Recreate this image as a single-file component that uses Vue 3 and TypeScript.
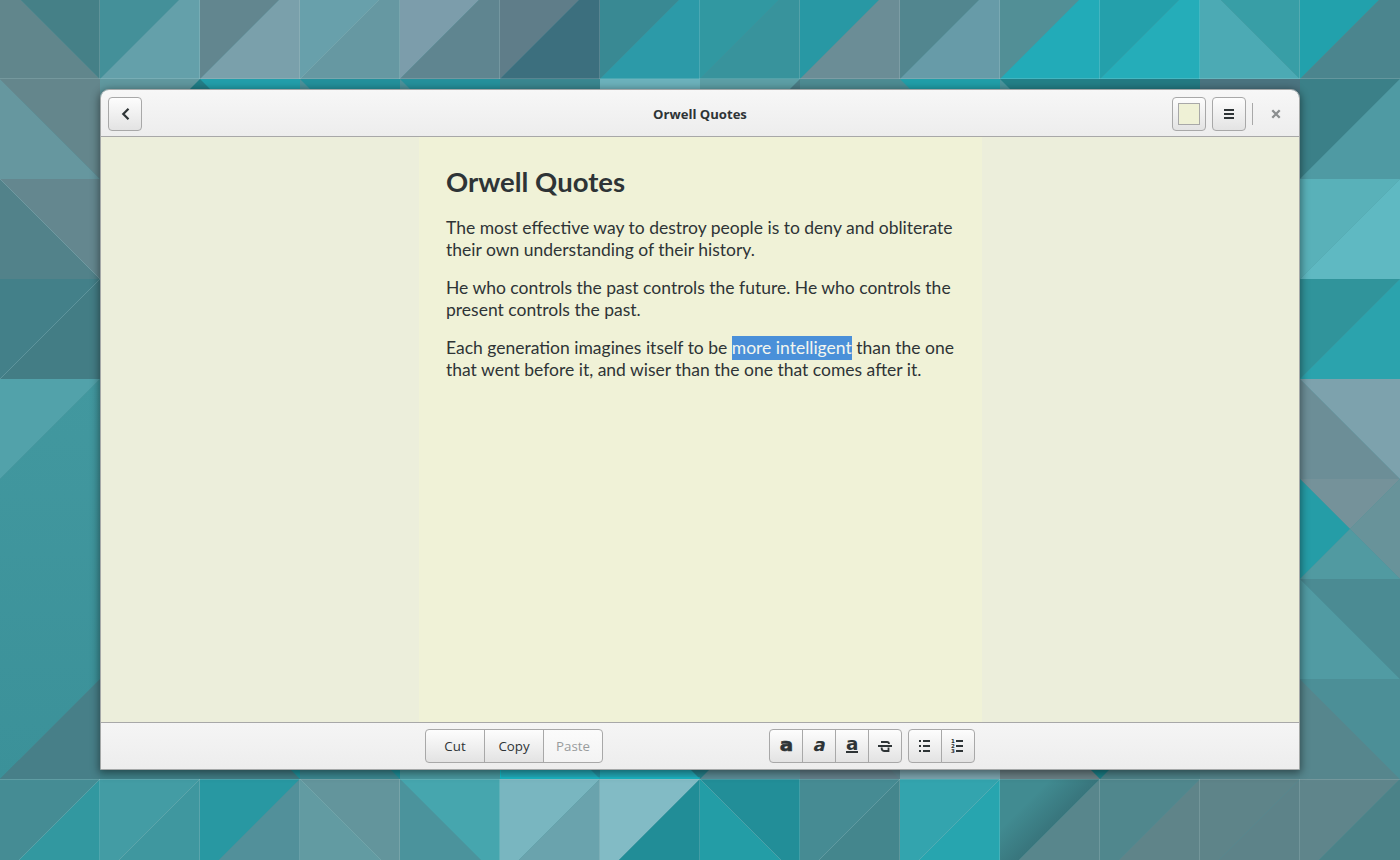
<script setup lang="ts">
interface Facet { points: string; fill: string }

const facets: Facet[] = []
const add = (points: string, fill: string) => facets.push({ points, fill })

// Each cell: diagonal direction, left-hand colour, right-hand colour.
type Cell = ['/' | '\\', string, string]
const cell = (x: number, y: number, [dir, left, right]: Cell) => {
  const r = x + 100
  const b = y + 100
  if (dir === '/') {
    add(`${x},${y} ${r},${y} ${x},${b}`, left)
    add(`${r},${y} ${r},${b} ${x},${b}`, right)
  } else {
    add(`${x},${y} ${r},${b} ${x},${b}`, left)
    add(`${x},${y} ${r},${y} ${r},${b}`, right)
  }
}

const top: Cell[] = [
  ['\\', '#61868c', '#458087'], ['/', '#449099', '#64a0aa'], ['/', '#62868f', '#7aa0ab'],
  ['/', '#68a0ab', '#6698a2'], ['/', '#7c9dab', '#5f8590'], ['/', '#5f7d89', '#3c6f7e'],
  ['/', '#398993', '#2c9aa8'], ['/', '#3198a1', '#38939c'], ['/', '#2898a4', '#6b8d96'],
  ['/', '#52868f', '#679ba8'], ['/', '#528f96', '#22abb8'], ['/', '#24a0ab', '#25adb9'],
  ['\\', '#4caab4', '#389ea6'], ['/', '#22a1ac', '#4b858e'],
]
const bottom: Cell[] = [
  ['/', '#458c94', '#3298a0'], ['/', '#439ca4', '#3f979f'], ['/', '#2898a2', '#52909a'],
  ['\\', '#629ba2', '#63959c'], ['\\', '#4b939c', '#46a6ae'], ['/', '#79b6c0', '#6aa3ad'],
  ['/', '#82bbc5', '#218d97'], ['\\', '#239da6', '#228e98'], ['/', '#468b93', '#44868d'],
  ['/', '#33a4ae', '#27a5af'], ['/', 'url(#shade)', '#58868c'], ['/', '#50878d', '#5f8489'],
  ['/', '#5e8489', '#5d8389'], ['/', '#5f858b', '#4b8288'],
]
const upperStrip = ['#64868c', '#60989f', '#229fab', '#23919c', '#25919c', '#3a8790', '#6cb2bc', '#5d9fa6', '#4e8c93', '#219fa9', '#238088', '#247a83', '#4b7480']
const lowerStrip = ['#477f88', '#3f8088', '#417c84', '#3b8790', '#49989f', '#22abb9', '#22abb9', '#5c8c96', '#64808b', '#7ca4ae', '#6b8085', '#4d8288', '#54848b']

upperStrip.forEach((c, i) => add(`${i * 100},79 ${i * 100 + 100},79 ${i * 100 + 100},100 ${i * 100},100`, c))
lowerStrip.forEach((c, i) => add(`${i * 100},760 ${i * 100 + 100},760 ${i * 100 + 100},779 ${i * 100},779`, c))
add('180,99 200,79 200,99', '#1f7d86')
add('200,79 220,99 200,99', '#247e88')
add('300,79 320,99 300,99', '#4d929b')
add('400,79 420,99 400,99', '#4d929b')
add('580,99 600,79 600,99', '#3a8790')
add('690,99 700,89 700,99', '#3f98a2')
add('780,99 800,79 800,99', '#4b7d86')
add('900,79 920,99 900,99', '#4d8f97')
add('1000,79 1020,99 1000,99', '#4b959d')
add('280,759 300,779 300,759', '#1d929c')
add('380,759 400,779 400,759', '#1d929c')
add('580,759 600,779 600,759', '#2491a0')
add('680,759 700,779 720,759', '#24828c')
add('880,759 900,779 900,759', '#61858f')
add('1080,759 1100,779 1120,759', '#1a7f87')
top.forEach((c, i) => cell(i * 100, -21, c))
bottom.forEach((c, i) => cell(i * 100, 779, c))

cell(0, 79, ['\\', '#66979f', '#64868c'])
cell(0, 179, ['\\', '#52828a', '#64878f'])
cell(0, 279, ['/', '#438089', '#437d85'])
add('0,379 100,379 0,479', '#52a2aa')
add('100,379 100,679 0,779 0,479', 'url(#sea)')
add('100,679 100,779 0,779', '#477f88')

cell(1300, 79, ['/', '#3b8088', '#4f9aa3'])
cell(1300, 179, ['/', '#59b1b9', '#5fb9c2'])
cell(1300, 279, ['/', '#30949b', '#2ba3ad'])
cell(1300, 379, ['\\', '#6c8e97', '#7da2ad'])
add('1300,479 1400,479 1350,529', '#75929a')
add('1400,479 1400,579 1350,529', '#68939a')
add('1300,479 1350,529 1300,579', '#259da7')
add('1350,529 1400,579 1300,579', '#519aa1')
cell(1300, 579, ['\\', '#519ba3', '#4b8b93'])
cell(1300, 679, ['\\', '#56868d', '#4c8f97'])

const columns = Array.from({ length: 14 }, (_, i) => i * 100 - 0.5)
</script>

<template>
  <div class="desktop">
    <svg class="wallpaper" width="1400" height="860" viewBox="0 0 1400 860" aria-hidden="true">
      <defs>
        <linearGradient id="sea" x1="0" y1="0" x2="0" y2="1">
          <stop offset="0" stop-color="#42989f" />
          <stop offset="1" stop-color="#3b9199" />
        </linearGradient>
        <linearGradient id="shade" x1="0" y1="0" x2=".5" y2=".5">
          <stop offset=".5" stop-color="#418b91" />
          <stop offset="1" stop-color="#38757c" />
        </linearGradient>
      </defs>
      <polygon v-for="(f, i) in facets" :key="i" :points="f.points" :fill="f.fill" />
      <g class="seams">
        <path v-for="x in columns" :key="x" :d="`M${x} 0V79M${x} 779V860`" />
        <path d="M0 78.5H1400M0 779.5H1400" />
        <path d="M300 79L379 0M100 779L19 860M200 779L119 860M300 779l81 81M700 779l81 81M900 779l-81 81M1000 779l-81 81M0 179l100 100M0 379L100 279" />
      </g>
      <path d="M500.5 770V778H700" fill="none" stroke="#13bdca" />
    </svg>

    <main class="window">
      <header class="titlebar">
        <button class="btn square" aria-label="Back">
          <svg width="16" height="16" viewBox="0 0 16 16"><path d="M11.5 2.8 6.3 8l5.2 5.2" fill="none" stroke="#2e3436" stroke-width="2.2" /></svg>
        </button>
        <h1 class="title">Orwell Quotes</h1>
        <div class="controls">
          <button class="btn square" aria-label="Note color"><span class="swatch"></span></button>
          <button class="btn square" aria-label="Menu">
            <svg width="16" height="16" viewBox="0 0 16 16"><path d="M3 3h10v2H3zM3 7h10v2H3zM3 11h10v2H3z" fill="#2e3436" /></svg>
          </button>
          <span class="separator"></span>
          <button class="close" aria-label="Close">
            <svg width="16" height="16" viewBox="0 0 16 16"><path d="m4.3 4.3 7.4 7.4m0-7.4-7.4 7.4" fill="none" stroke="#8b8e8f" stroke-width="2.3" /></svg>
          </button>
        </div>
      </header>

      <section class="body">
        <article class="note">
          <h2>Orwell Quotes</h2>
          <p>The most effective way to destroy people is to deny and obliterate<br>their own understanding of their history.</p>
          <p>He who controls the past controls the future. He who controls the<br>present controls the past.</p>
          <p>Each generation imagines itself to be <mark>more intelligent</mark> than the one<br>that went before it, and wiser than the one that comes after it.</p>
        </article>
      </section>

      <footer class="toolbar">
        <div class="group clip">
          <button class="btn">Cut</button>
          <button class="btn">Copy</button>
          <button class="btn disabled" disabled>Paste</button>
        </div>
        <div class="formats">
          <div class="group">
            <button class="btn" aria-label="Bold"><svg width="16" height="16"><text class="glyph heavy" x="1.8" y="13" textLength="13.4" lengthAdjust="spacingAndGlyphs">a</text></svg></button>
            <button class="btn" aria-label="Italic"><svg width="16" height="16"><text class="glyph" transform="translate(1.4 13) skewX(-14)" textLength="12" lengthAdjust="spacingAndGlyphs">a</text></svg></button>
            <button class="btn" aria-label="Underline"><svg width="16" height="16"><text class="glyph" x="2" y="12" textLength="12.4" lengthAdjust="spacingAndGlyphs">a</text><path d="M2 13h12v2H2z" fill="#2e3436" /></svg></button>
            <button class="btn" aria-label="Strikethrough">
              <svg width="16" height="16"><path d="M4 4h6q2 0 2 2M4.6 9.5q0 3.5 2.4 3.5h4.5V9.5" fill="none" stroke="#2e3436" stroke-width="1.8" /><path d="M1 7h14v2H1z" fill="#2e3436" /></svg>
            </button>
          </div>
          <div class="group">
            <button class="btn" aria-label="Bulleted list">
              <svg width="16" height="16"><path d="M2 2h2v2H2zM2 7h2v2H2zM2 12h2v2H2zM6 2h7v2H6zM6 7h7v2H6zM6 12h7v2H6z" fill="#2e3436" /></svg>
            </button>
            <button class="btn" aria-label="Numbered list">
              <svg width="16" height="16"><g class="digits"><text x="1" y="5">1</text><text x="1" y="10">2</text><text x="1" y="15">3</text></g><path d="M6 2h7v2H6zM6 7h7v2H6zM6 12h7v2H6z" fill="#2e3436" /></svg>
            </button>
          </div>
        </div>
      </footer>
    </main>
  </div>
</template>

<style>
html, body { margin: 0; overflow: hidden; }
</style>

<style scoped>
* { box-sizing: border-box; }
.desktop {
  display: grid;
  grid-template: 860px / 1400px;
  justify-items: center;
  overflow: hidden;
  font-family: "Open Sans", "Noto Sans", sans-serif;
  color: #2e3436;
}
.wallpaper { grid-area: 1 / 1; display: block; background: #4a8f97; }
.seams { fill: none; stroke: rgba(200, 225, 225, 0.2); stroke-width: 1; }
.window {
  grid-area: 1 / 1;
  z-index: 1;
  width: 1200px;
  height: 681px;
  margin-top: 89px;
  display: flex;
  flex-direction: column;
  border: 1px solid #a5a8a8;
  border-radius: 9px 9px 0 0;
  overflow: hidden;
  box-shadow: 0 2px 8px 1px rgba(0, 0, 0, 0.45);
}
.titlebar {
  flex: 0 0 47px;
  display: grid;
  grid-template-columns: 1fr auto 1fr;
  align-items: center;
  padding: 2px 13px 0 7px;
  background: linear-gradient(#f7f7f7, #ededed);
  border-bottom: 1px solid #a8a8a8;
}
.title { margin: 0 0 0 6px; font-size: 13.1px; font-weight: 700; line-height: 20px; }
.btn {
  height: 34px;
  padding: 0;
  display: flex;
  align-items: center;
  justify-content: center;
  font: 13.3px/20px "Open Sans", "Noto Sans", sans-serif;
  color: #2e3436;
  border: 1px solid #a8a8a8;
  border-radius: 4px;
  background: linear-gradient(#fdfdfd, #e3e3e3);
}
.square { width: 34px; }
.btn svg, .close svg { display: block; overflow: visible; }
.controls { justify-self: end; display: flex; align-items: center; gap: 6px; }
.swatch { width: 22px; height: 22px; background: #eff1d6; border: 1px solid #a8a8a8; }
.separator { width: 1px; height: 22px; background: #a8a8a8; }
.close { margin: 0 2px 0 9px; padding: 0; width: 16px; height: 16px; border: 0; background: none; }
.body { flex: 1; display: flex; justify-content: center; background: #eceedb; }
.note {
  width: 563px;
  padding: 28px 0 0 27.5px;
  background: #f0f2d7;
  font-family: Lato, Carlito, sans-serif;
}
.note h2 { margin: 0 0 18px; font-size: 27.5px; line-height: 34px; font-weight: 700; }
.note p { margin: 0 0 16px; font-size: 17.5px; line-height: 22px; white-space: nowrap; }
.note mark { display: inline-block; height: 24px; margin: -1px 0; line-height: 24px; color: #f3f6ef; background: #4a90d9; vertical-align: top; }
.toolbar {
  flex: 0 0 47px;
  display: flex;
  justify-content: space-between;
  padding: 6px 324px 0;
  background: linear-gradient(#f5f5f5, #ededed);
  border-top: 1px solid #a8a8a8;
}
.group { display: flex; }
.group .btn { width: 34px; border-radius: 0; }
.group .btn + .btn { margin-left: -1px; }
.group .btn:first-child { border-radius: 4px 0 0 4px; }
.group .btn:last-child { border-radius: 0 4px 4px 0; }
.clip .btn { width: 60px; }
.group .disabled { color: #999c9d; background: linear-gradient(#fbfbfb, #f3f3f3); }
.formats { display: flex; gap: 6px; }
.glyph { font: 700 18px/1 "DejaVu Sans", sans-serif; fill: #2e3436; }
.heavy { stroke: #2e3436; stroke-width: 0.6; }
.digits { font: 700 5.5px "DejaVu Sans", sans-serif; fill: #2e3436; }
</style>
